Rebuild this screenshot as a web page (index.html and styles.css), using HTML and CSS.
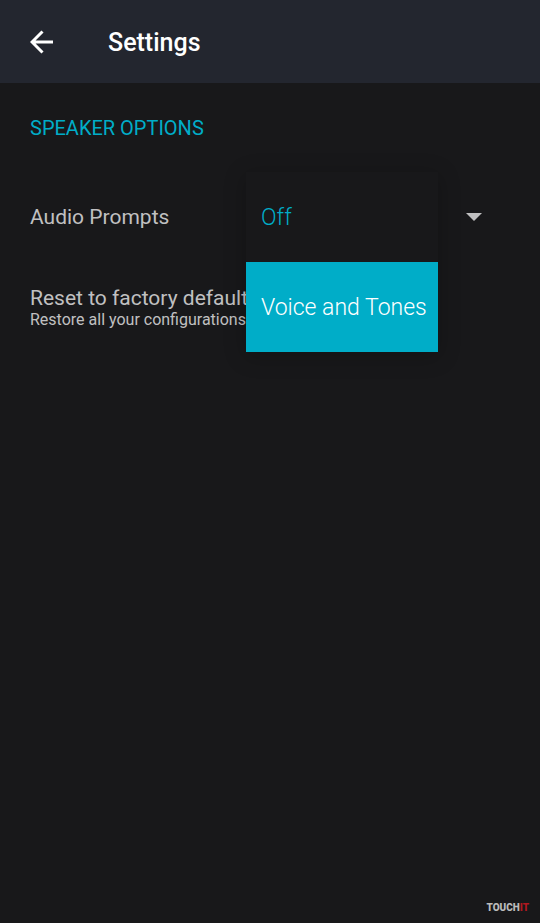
FILE: index.html
```
<!DOCTYPE html>
<html lang="en">
<head>
<meta charset="utf-8">
<title>Settings</title>
<link rel="stylesheet" href="styles.css">
</head>
<body>
<header class="bar">
  <svg class="back" viewBox="0 0 24 24" width="24" height="24"><path d="M23 12H2M12.5 1.5L2 12l10.500 10.500" fill="none" stroke="#fff" stroke-width="3"/></svg>
  <h1>Settings</h1>
</header>
<main>
  <h2>SPEAKER OPTIONS</h2>
  <div class="row">
    <span class="label">Audio Prompts</span>
    <svg class="caret" viewBox="0 0 16 8" width="16" height="8"><path d="M0 0h16l-8 8z" fill="#c0c0c1"/></svg>
    <ul class="menu">
      <li>Off</li>
      <li class="selected">Voice and Tones</li>
    </ul>
  </div>
  <div class="reset">
    <div class="label">Reset to factory defaults</div>
    <div class="hint">Restore all your configurations</div>
  </div>
</main>
<footer>TOUCH<span>IT</span></footer>
</body>
</html>
```
FILE: styles.css
```
* { box-sizing: border-box; margin: 0; padding: 0; }
body { height: 923px; overflow: hidden; display: flex; flex-direction: column; background: #18181a; color: #c0c0c1; font-family: Roboto, sans-serif; }
.bar { height: 83px; flex: none; display: flex; align-items: center; padding: 0 30px; gap: 54px; background: #23262f; color: #fff; }
h1 { font-size: 25px; line-height: 30px; font-weight: 500; padding-top: 2px; }
main { flex: 1; padding: 33px 30px 0; }
h2 { font-size: 20px; line-height: 24px; font-weight: 400; color: #00adc8; }
.row { position: relative; height: 90px; margin-top: 32px; padding-right: 28px; display: flex; align-items: center; justify-content: space-between; }
.label { font-size: 21px; line-height: 24px; white-space: nowrap; }
.reset { padding-top: 24px; }
.hint { font-size: 16px; line-height: 20px; white-space: nowrap; }
.menu { position: absolute; left: 216px; top: 0; width: 192px; list-style: none; background: #18181a; box-shadow: 0 4px 20px rgba(0,0,0,.25); }
.menu li { height: 90px; display: flex; align-items: center; padding: 0 15px; font-size: 23px; font-weight: 300; color: #00adc8; white-space: nowrap; }
.menu .selected { background: #00adc8; color: #fff; }
footer { padding: 0 11px 9px; text-align: right; font-size: 10px; line-height: 12px; font-weight: 900; color: #bbb; }
footer span { color: #b01820; }
```
